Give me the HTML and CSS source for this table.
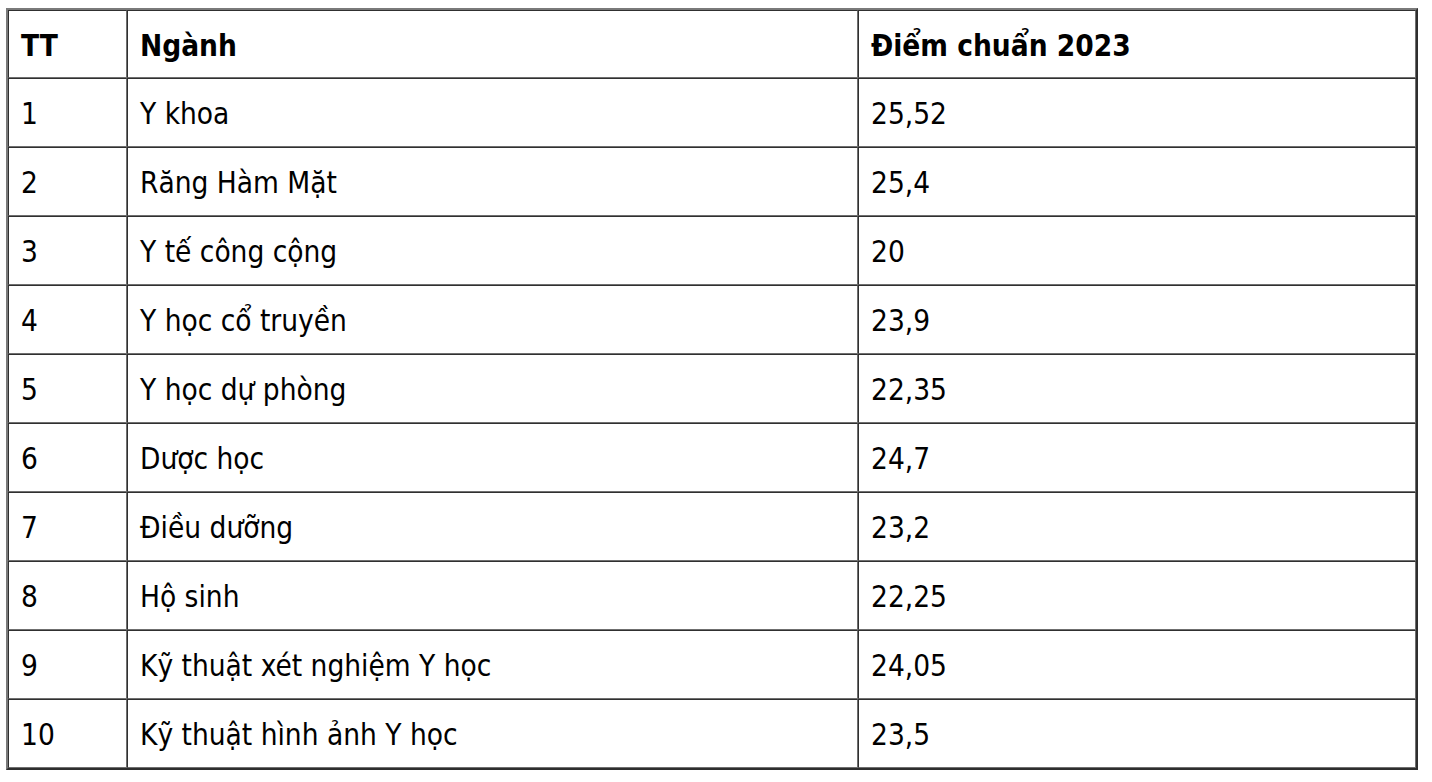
FILE: index.html
```html
<!DOCTYPE html>
<html lang="vi">
<head>
<meta charset="utf-8">
<title>Điểm chuẩn 2023</title>
<link rel="stylesheet" href="styles.css">
</head>
<body>
<table class="scores">
  <colgroup>
    <col class="c-tt">
    <col class="c-nganh">
    <col class="c-diem">
  </colgroup>
  <thead>
    <tr><th>TT</th><th>Ngành</th><th>Điểm chuẩn 2023</th></tr>
  </thead>
  <tbody>
    <tr><td>1</td><td>Y khoa</td><td>25,52</td></tr>
    <tr><td>2</td><td>Răng Hàm Mặt</td><td>25,4</td></tr>
    <tr><td>3</td><td>Y tế công cộng</td><td>20</td></tr>
    <tr><td>4</td><td>Y học cổ truyền</td><td>23,9</td></tr>
    <tr><td>5</td><td>Y học dự phòng</td><td>22,35</td></tr>
    <tr><td>6</td><td>Dược học</td><td>24,7</td></tr>
    <tr><td>7</td><td>Điều dưỡng</td><td>23,2</td></tr>
    <tr><td>8</td><td>Hộ sinh</td><td>22,25</td></tr>
    <tr><td>9</td><td>Kỹ thuật xét nghiệm Y học</td><td>24,05</td></tr>
    <tr><td>10</td><td>Kỹ thuật hình ảnh Y học</td><td>23,5</td></tr>
  </tbody>
</table>
</body>
</html>
```

FILE: styles.css
```css
html, body {
  background: #ffffff;
}
body {
  margin: 8px 0 0 6px;
  font-family: "DejaVu Sans Condensed", "DejaVu Sans", sans-serif;
  color: #000000;
}
.scores {
  width: 1412px;
  border-collapse: separate;
  border-spacing: 0;
  table-layout: fixed;
  border-style: solid;
  border-width: 2px;
  border-color: #7a7a7a #2e2e2e #2e2e2e #7a7a7a;
  font-size: 29.5px;
}
.c-tt { width: 119px; }
.c-nganh { width: 731px; }
.scores th,
.scores td {
  border-style: solid;
  border-width: 1px;
  border-color: #303030 #6f6f6f #6f6f6f #303030;
  padding: 3px 12px 0;
  text-align: left;
  vertical-align: middle;
  white-space: nowrap;
}
.scores th {
  height: 63px;
  font-weight: bold;
}
.scores td {
  height: 64px;
  font-weight: normal;
}
```
